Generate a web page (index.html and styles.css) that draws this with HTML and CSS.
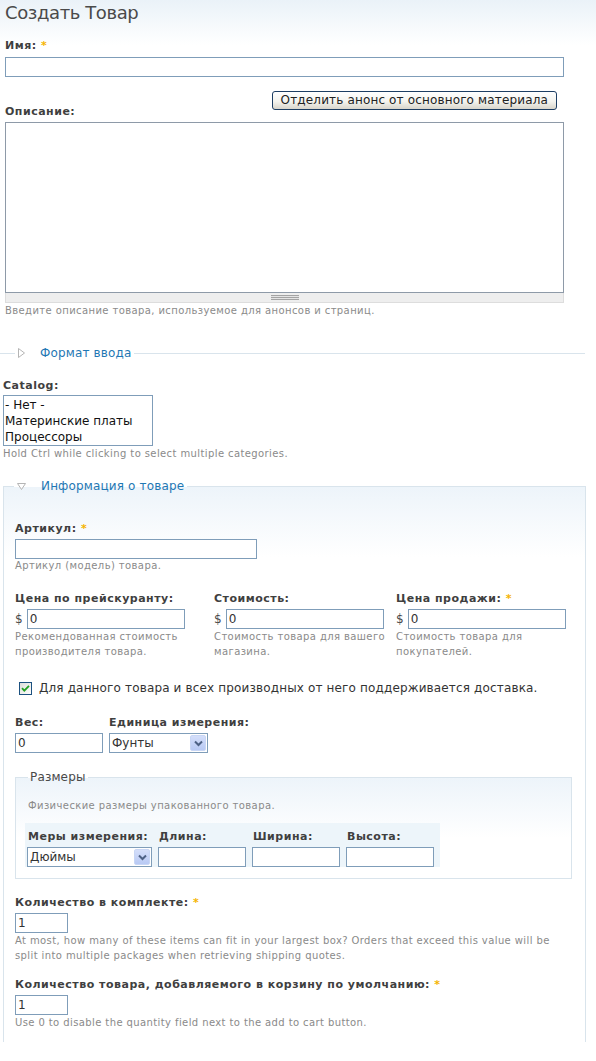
FILE: index.html
```html
<!DOCTYPE html>
<html lang="ru">
<head>
<meta charset="utf-8">
<title>Создать Товар</title>
<link rel="stylesheet" href="styles.css">
</head>
<body>
<div class="page">
  <h1 class="title">Создать Товар</h1>

  <div class="item name-item">
    <label class="lbl">Имя: <span class="req">*</span></label>
    <input class="txt w-name" type="text">
  </div>

  <div class="teaser-row"><button class="btn" type="button">Отделить анонс от основного материала</button></div>

  <div class="item body-item">
    <label class="lbl">Описание:</label>
    <div class="ta-wrap">
      <textarea class="ta"></textarea>
      <div class="grippie"><div class="grip-lines"></div></div>
    </div>
    <div class="desc">Введите описание товара, используемое для анонсов и страниц.</div>
  </div>

  <fieldset class="fs collapsed">
    <legend class="lg"><svg class="tri" width="7" height="10" viewBox="0 0 7 10"><polygon points="0.5,0.5 6.5,5 0.5,9.5" fill="#fff" stroke="#b5b5b5" stroke-width="1"/></svg>Формат ввода</legend>
  </fieldset>

  <div class="item catalog">
    <label class="lbl">Catalog:</label>
    <div class="multi">
      <div class="opt">- Нет -</div>
      <div class="opt">Материнские платы</div>
      <div class="opt">Процессоры</div>
    </div>
    <div class="desc">Hold Ctrl while clicking to select multiple categories.</div>
  </div>

  <fieldset class="fs info">
    <legend class="lg"><svg class="tri-d" width="9" height="7" viewBox="0 0 9 7"><polygon points="0.5,0.5 8.5,0.5 4.5,6.5" fill="#fff" stroke="#b5b5b5" stroke-width="1"/></svg>Информация о товаре</legend>

    <div class="fi sku">
      <label class="lbl">Артикул: <span class="req">*</span></label>
      <input class="txt w-sku" type="text">
      <div class="desc">Артикул (модель) товара.</div>
    </div>

    <div class="prices">
      <div class="pcol">
        <label class="lbl">Цена по прейскуранту:</label>
        <div class="money"><span class="cur">$</span><input class="txt w-price" type="text" value="0"></div>
        <div class="desc pdesc">Рекомендованная стоимость производителя товара.</div>
      </div>
      <div class="pcol">
        <label class="lbl">Стоимость:</label>
        <div class="money"><span class="cur">$</span><input class="txt w-price" type="text" value="0"></div>
        <div class="desc pdesc">Стоимость товара для вашего магазина.</div>
      </div>
      <div class="pcol">
        <label class="lbl">Цена продажи: <span class="req">*</span></label>
        <div class="money"><span class="cur">$</span><input class="txt w-price" type="text" value="0"></div>
        <div class="desc pdesc">Стоимость товара для покупателей.</div>
      </div>
    </div>

    <div class="chk-row">
      <svg class="chk" width="13" height="13" viewBox="0 0 13 13">
        <defs><linearGradient id="cbg" x1="0" y1="0" x2="1" y2="1"><stop offset="0" stop-color="#dcdcd7"/><stop offset="1" stop-color="#ffffff"/></linearGradient></defs>
        <rect x="0.5" y="0.5" width="12" height="12" fill="url(#cbg)" stroke="#1c5180"/>
        <path d="M3 6.2 L5.3 8.6 L10 3.8" fill="none" stroke="#21a121" stroke-width="1.8"/>
      </svg>
      <span>Для данного товара и всех производных от него поддерживается доставка.</span>
    </div>

    <div class="weight-row">
      <div class="fi">
        <label class="lbl">Вес:</label>
        <input class="txt w-weight" type="text" value="0">
      </div>
      <div class="fi">
        <label class="lbl">Единица измерения:</label>
        <div class="sel w-unit"><span class="sel-text">Фунты</span><span class="arr"><svg width="9" height="7" viewBox="0 0 9 7"><path d="M1 1.5 L4.5 5 L8 1.5" fill="none" stroke="#4d6185" stroke-width="2"/></svg></span></div>
      </div>
    </div>

    <fieldset class="fs dims">
      <legend class="lg plain">Размеры</legend>
      <div class="desc">Физические размеры упакованного товара.</div>
      <div class="dim-table">
        <div class="dcol">
          <label class="lbl">Меры измерения:</label>
          <div class="sel w-lenunit"><span class="sel-text">Дюймы</span><span class="arr"><svg width="9" height="7" viewBox="0 0 9 7"><path d="M1 1.5 L4.5 5 L8 1.5" fill="none" stroke="#4d6185" stroke-width="2"/></svg></span></div>
        </div>
        <div class="dcol">
          <label class="lbl">Длина:</label>
          <input class="txt w-dim" type="text">
        </div>
        <div class="dcol">
          <label class="lbl">Ширина:</label>
          <input class="txt w-dim" type="text">
        </div>
        <div class="dcol">
          <label class="lbl">Высота:</label>
          <input class="txt w-dim" type="text">
        </div>
      </div>
    </fieldset>

    <div class="fi qty">
      <label class="lbl">Количество в комплекте: <span class="req">*</span></label>
      <input class="txt w-qty" type="text" value="1">
      <div class="desc ldesc">At most, how many of these items can fit in your largest box? Orders that exceed this value will be split into multiple packages when retrieving shipping quotes.</div>
    </div>

    <div class="fi qty2">
      <label class="lbl">Количество товара, добавляемого в корзину по умолчанию: <span class="req">*</span></label>
      <input class="txt w-qty" type="text" value="1">
      <div class="desc ldesc">Use 0 to disable the quantity field next to the add to cart button.</div>
    </div>
  </fieldset>
</div>
</body>
</html>
```

FILE: styles.css
```css
* { box-sizing: border-box; }

html, body {
  margin: 0;
  padding: 0;
}

body {
  font-family: "DejaVu Sans", Verdana, sans-serif;
  font-size: 12px;
  color: #494949;
  background: #fff linear-gradient(#eaf2f8, #ffffff 45px) no-repeat;
  width: 596px;
  height: 1061px;
  overflow: hidden;
}

.page {
  width: 596px;
}

.title {
  margin: 0;
  padding-left: 5px;
  font-size: 18px;
  line-height: 26px;
  font-weight: normal;
  letter-spacing: -0.4px;
  color: #4a4a4a;
}

.lbl {
  display: block;
  font-size: 11px;
  font-weight: bold;
  line-height: 14px;
  letter-spacing: 0.5px;
  color: #3f3f3f;
}

.req {
  color: #f5b400;
  font-weight: bold;
}

.txt {
  display: block;
  height: 20px;
  margin: 0;
  border: 1px solid #7f9db9;
  padding: 0 2px;
  font-family: "DejaVu Sans", Verdana, sans-serif;
  font-size: 12px;
  color: #333;
  background: #fff;
  outline: none;
}

.desc {
  font-size: 10px;
  line-height: 14px;
  letter-spacing: 0.4px;
  color: #8a8a8a;
}

/* name */
.name-item {
  margin: 13px 0 0 5px;
}
.name-item .txt {
  margin-top: 4px;
}
.w-name { width: 559px; }

/* teaser button */
.teaser-row {
  margin-top: 14px;
  width: 564px;
  height: 14px;
  display: flex;
  justify-content: flex-end;
  padding-right: 7px;
}
.btn {
  height: 19px;
  flex: none;
  padding: 0 8px;
  border: 1px solid #1d3e63;
  border-radius: 3px;
  background: linear-gradient(#ffffff, #f4f4ef 55%, #d9d5cb);
  font-family: "DejaVu Sans", Verdana, sans-serif;
  font-size: 12px;
  line-height: 17px;
  letter-spacing: 0.15px;
  color: #222;
}

/* body */
.body-item {
  margin-left: 5px;
}
.ta-wrap {
  margin-top: 3px;
  width: 559px;
}
.ta {
  display: block;
  width: 559px;
  height: 171px;
  margin: 0;
  border: 1px solid #8e9aa8;
  resize: none;
  background: #fff;
}
.grippie {
  height: 10px;
  background: #eeeeee;
  border: 1px solid #dddddd;
  border-top: 0;
  padding-top: 2px;
}
.grip-lines {
  width: 28px;
  height: 5px;
  margin: 0 auto;
  background: repeating-linear-gradient(#a4a4a4 0 1px, #e4e4e4 1px 2px);
}
.body-item .desc {
  margin-top: 1px;
}

/* fieldsets */
.fs {
  margin: 0;
  min-width: 0;
}
.lg {
  font-size: 12px;
  line-height: 14px;
  letter-spacing: 0.15px;
  color: #1f78b4;
  padding: 0 3px;
  display: flex;
  align-items: center;
}
.tri {
  margin-right: 15px;
}
.tri-d {
  margin-right: 15px;
}

.collapsed {
  margin-top: 28px;
  width: 585px;
  border: 0;
  border-top: 1px solid #d9e4ec;
  padding: 0;
}
.collapsed .lg {
  margin-left: 15px;
}

/* catalog */
.catalog {
  margin: 19px 0 0 3px;
}
.multi {
  margin-top: 2px;
  width: 150px;
  height: 51px;
  border: 1px solid #7f9db9;
  padding: 1px 1px;
  background: #fff;
}
.opt {
  font-size: 12px;
  line-height: 16px;
  color: #111;
}
.catalog .desc {
  margin-top: 1px;
}

/* product info */
.info {
  margin: 18px 0 0 3px;
  width: 583px;
  border: 1px solid #d9e4ec;
  border-bottom: 0;
  padding: 29px 11px 12px 11px;
  background: #fff linear-gradient(#edf4fa, #ffffff 70px) no-repeat;
}
.info > .lg {
  margin-left: -1px;
}

.sku .txt {
  margin-top: 3px;
}
.w-sku { width: 242px; }

.prices {
  margin-top: 19px;
  display: grid;
  grid-template-columns: 199px 182px 170px;
}
.money {
  margin-top: 3px;
  display: flex;
  align-items: center;
  gap: 4px;
}
.cur {
  font-size: 12px;
  color: #494949;
}
.w-price { width: 158px; }
.pdesc {
  width: 178px;
  line-height: 15px;
}

.chk-row {
  margin-top: 22px;
  display: flex;
  align-items: center;
  height: 14px;
  font-size: 12px;
  letter-spacing: 0.15px;
  color: #333;
}
.chk {
  margin-left: 4px;
  margin-right: 7px;
  flex: none;
}

.weight-row {
  margin-top: 21px;
  display: flex;
  gap: 6px;
}
.weight-row .txt,
.weight-row .sel {
  margin-top: 3px;
}
.w-weight { width: 88px; }

.sel {
  display: flex;
  align-items: center;
  height: 20px;
  border: 1px solid #7f9db9;
  background: #fff;
  padding: 0 1px 0 2px;
}
.sel-text {
  flex: 1;
  font-size: 12px;
  color: #333;
}
.arr {
  flex: none;
  width: 16px;
  height: 16px;
  border: 1px solid #c8d6f5;
  border-radius: 2px;
  background: linear-gradient(#d4defa, #b8c9f4);
  display: flex;
  align-items: center;
  justify-content: center;
}
.w-unit { width: 99px; }

/* dimensions */
.dims {
  margin-top: 17px;
  width: 557px;
  border: 1px solid #d9e4ec;
  padding: 15px 12px 11px 12px;
  background: #fff linear-gradient(#edf4fa, #ffffff 60px) no-repeat;
}
.lg.plain {
  color: #494949;
  margin-left: 0;
  padding: 0 2px;
}
.dim-table {
  margin: 10px 0 0 -3px;
  width: 415px;
  background: #edf5fa;
  padding: 7px 0 0 2px;
  display: flex;
  gap: 6px;
}
.dcol .lbl {
  padding-left: 1px;
}
.dcol .txt,
.dcol .sel {
  margin-top: 3px;
}
.w-lenunit { width: 125px; }
.w-dim { width: 88px; }

/* quantities */
.qty {
  margin-top: 17px;
}
.qty2 {
  margin-top: 15px;
}
.qty .txt,
.qty2 .txt {
  margin-top: 3px;
}
.w-qty { width: 53px; }
.ldesc {
  line-height: 15px;
}
```
